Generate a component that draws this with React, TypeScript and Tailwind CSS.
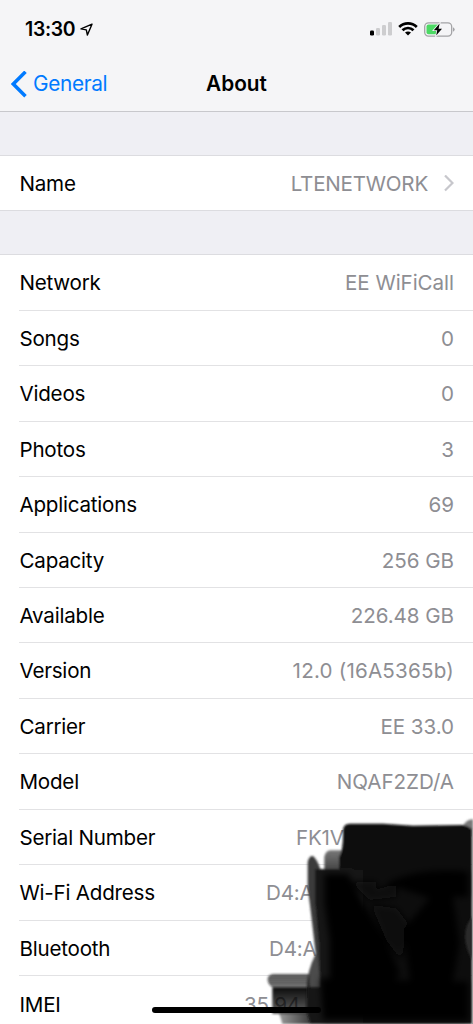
import React from 'react';

interface RowProps {
  label: string;
  value: string;
  valueClass?: string;
  last?: boolean;
}

const rows: RowProps[] = [
  { label: 'Network', value: 'EE WiFiCall' },
  { label: 'Songs', value: '0' },
  { label: 'Videos', value: '0' },
  { label: 'Photos', value: '3' },
  { label: 'Applications', value: '69' },
  { label: 'Capacity', value: '256 GB' },
  { label: 'Available', value: '226.48 GB' },
  { label: 'Version', value: '12.0 (16A5365b)', valueClass: 'tracking-[0.2px]' },
  { label: 'Carrier', value: 'EE 33.0' },
  { label: 'Model', value: 'NQAF2ZD/A' },
  { label: 'Serial Number', value: 'FK1V', valueClass: 'w-[158px]' },
  { label: 'Wi-Fi Address', value: 'D4:A', valueClass: 'w-[188px]' },
  { label: 'Bluetooth', value: 'D4:A', valueClass: 'w-[185px]' },
  { label: 'IMEI', value: '35 94', valueClass: 'w-[210px]', last: true },
];

const StatusBar = () => (
  <div className="flex h-[58px] items-center justify-between pl-[25px] pr-[18px]">
    <div className="flex items-center gap-[5px]">
      <span className="pt-[2px] text-[19.4px] font-semibold leading-none tracking-[-0.3px]">13:30</span>
      <svg className="h-[13px] w-[13px]" viewBox="0 0 13 13" fill="none">
        <path d="M12 1.2L1 5.9L6.3 6.9L7.4 12Z" stroke="#000" strokeWidth="1.4" strokeLinejoin="round" />
      </svg>
    </div>
    <div className="flex items-center">
      <svg className="h-[14px] w-[22px]" viewBox="0 0 22 14">
        <rect x="0" y="8.5" width="4" height="5" rx="1.2" fill="#000" />
        <rect x="6" y="6" width="4" height="7.5" rx="1.2" fill="#cdcdcf" />
        <rect x="12" y="3" width="4" height="10.5" rx="1.2" fill="#cdcdcf" />
        <rect x="18" y="0" width="4" height="13.5" rx="1.2" fill="#cdcdcf" />
      </svg>
      <svg className="ml-[6px] h-[14px] w-[20px]" viewBox="0 0 20 14" fill="none" stroke="#000" strokeWidth="2.7">
        <path d="M1.2 5C6.2 0.2 13.8 0.2 18.8 5" />
        <path d="M4.5 8.3C7.6 5.2 12.4 5.2 15.5 8.3" />
        <path d="M10 13.4L7 10.5C8.6 9.1 11.4 9.1 13 10.5Z" fill="#000" stroke="none" />
      </svg>
      <svg className="ml-[6px] h-[15px] w-[31px]" viewBox="0 0 31 15">
        <rect x="0.7" y="0.9" width="27" height="13.2" rx="3.8" fill="none" stroke="#a3a3a6" strokeWidth="1.3" />
        <path d="M4.5 2.6H14V12.3H4.5Q2.5 12.3 2.5 10.3V4.6Q2.5 2.6 4.5 2.6Z" fill="#4cd964" />
        <path d="M29 5.2Q30.7 6 30.7 7.5Q30.7 9 29 9.8Z" fill="#a3a3a6" />
        <path d="M15.6 1.6L9.8 8.2H13.2L12.2 13.6L18 6.8H14.6Z" fill="#000" stroke="#f5f5f7" strokeWidth="1.6" paintOrder="stroke" />
      </svg>
    </div>
  </div>
);

const NavBar = () => (
  <div className="grid h-[53px] grid-cols-[1fr_auto_1fr] items-center pl-[11px] pr-[11px]">
    <div className="flex items-center gap-[6px] text-[#007aff]">
      <svg className="h-[28px] w-[16px]" viewBox="0 0 16 28" fill="none">
        <path d="M14.5 0.8L2.3 13L14.5 25.2" stroke="currentColor" strokeWidth="3.5" />
      </svg>
      <span className="text-[20.8px] leading-none tracking-[-0.35px]">General</span>
    </div>
    <span className="text-[20.8px] font-semibold leading-none">About</span>
    <span />
  </div>
);

const Row = ({ label, value, valueClass = 'tracking-[-0.05px]', last }: RowProps) => (
  <div className="h-[55.45px] pl-[19px]">
    <div className={`flex h-full items-center justify-between pr-[19px] pt-[2px] ${last ? '' : 'border-b border-[#e2e2e4]'}`}>
      <span className="whitespace-nowrap pl-[0.5px] text-black">{label}</span>
      <span className={`whitespace-nowrap text-[#8e8e93] ${valueClass}`}>{value}</span>
    </div>
  </div>
);

// Marker strokes drawn over the identifiers, 3 units per pixel
const Scribble = () => (
  <svg className="absolute bottom-0 right-0 h-[224px] w-[240px]" viewBox="0 0 720 672">
    <defs>
      <filter id="soft" x="-5%" y="-5%" width="110%" height="110%">
        <feGaussianBlur stdDeviation="3" />
      </filter>
      <filter id="softer" x="-10%" y="-10%" width="120%" height="120%">
        <feGaussianBlur stdDeviation="9" />
      </filter>
      <linearGradient id="tip" x1="0" y1="0" x2="0" y2="1">
        <stop offset="0" stopColor="#333" stopOpacity="0.8" />
        <stop offset="1" stopColor="#000" stopOpacity="0.55" />
      </linearGradient>
      <linearGradient id="tail" x1="0" y1="0" x2="0" y2="1">
        <stop offset="0" stopColor="#000" stopOpacity="0.95" />
        <stop offset="1" stopColor="#000" stopOpacity="0.62" />
      </linearGradient>
      <linearGradient id="foot" x1="0" y1="0" x2="1" y2="0">
        <stop offset="0" stopColor="#000" stopOpacity="0.4" />
        <stop offset="1" stopColor="#000" stopOpacity="0.8" />
      </linearGradient>
      <linearGradient id="step" x1="0" y1="0" x2="0" y2="1">
        <stop offset="0" stopColor="#777" />
        <stop offset="1" stopColor="#1a1a1a" />
      </linearGradient>
    </defs>
    <g filter="url(#soft)">
      <path d="M690 76Q704 56 720 58V110H690Z" fill="#777" />
      <path d="M274 170Q278 152 292 151H345V260H274Z" fill="url(#step)" />
      <path d="M318 172Q332 150 330 90Q332 71 350 71H450L540 77L690 75Q706 78 717 88V672H318Z" fill="#0b0b0b" />
      <path d="M224 185Q229 166 240 168Q254 180 262 208H360V560H222Q222 520 248 462Q238 370 224 260Z" fill="#3a3a3a" />
      <path d="M246 208H390V672H262Q262 520 258 430L246 300Z" fill="#141414" />
      <path d="M248 462Q222 515 222 560H262L252 470Z" fill="#4c4c4c" />
      <path d="M104 542Q102 524 120 522H230V568H130Q108 560 104 542Z" fill="url(#tip)" />
      <path d="M118 563H235V642H118Z" fill="url(#tail)" />
      <path d="M138 640H240V672H148Q142 650 138 640Z" fill="url(#foot)" />
      <path d="M222 560H320V672H232L220 630Z" fill="#161616" />
    </g>
    <g filter="url(#softer)">
      <path d="M274 222H345L390 310L460 420L500 520L440 610H290Q290 520 290 420L274 310Z" fill="#030303" />
      <path d="M262 535L705 545V660H270Z" fill="#040404" />
      <path d="M350 245H430V270L490 250V290L410 300L370 260Z" fill="#0e0e0e" />
      <path d="M415 315L490 325L525 370L505 480L460 420Z" fill="#0d0d0d" />
      <path d="M460 250Q560 200 705 215V290L660 290L680 430L650 600H540L510 390L590 295Z" fill="#030303" />
      <path d="M360 590H470L450 660H350Z" fill="#060606" />
    </g>
    <path d="M717 350Q695 375 696 415Q700 450 717 480Z" fill="#2a2a2a" filter="url(#soft)" />
    <rect x="717" y="86" width="3" height="586" fill="#9a9a9a" />
  </svg>
);

const App = () => (
  <div className="relative h-[1024px] w-[473px] overflow-hidden bg-[#efeff4] font-['Inter',sans-serif] text-black">
    <header className="h-[112px] border-b border-[#c8c8cc] bg-[#f5f5f7]">
      <StatusBar />
      <NavBar />
    </header>
    <main className="text-[20.6px] leading-none tracking-[-0.23px]">
      <section className="mt-[43px] flex h-[56px] items-center justify-between border-y border-[#dcdce0] bg-white pl-[19.5px] pr-[19px]">
        <span className="pt-[2px]">Name</span>
        <span className="flex items-center gap-[16px] text-[#8e8e93]">
          <span className="pt-[2px]">LTENETWORK</span>
          <svg className="h-[17px] w-[10px]" viewBox="0 0 10 17" fill="none">
            <path d="M1 0.5L8.5 8L1 15.5" stroke="#c7c7cc" strokeWidth="2.2" />
          </svg>
        </span>
      </section>
      <section className="mt-[43.4px] border-t border-[#dcdce0] bg-white">
        {rows.map((row) => (
          <Row key={row.label} {...row} />
        ))}
      </section>
    </main>
    <Scribble />
    <div className="absolute bottom-[11px] left-[152px] h-[6px] w-[169px] rounded-full bg-black" />
  </div>
);

export default App;
